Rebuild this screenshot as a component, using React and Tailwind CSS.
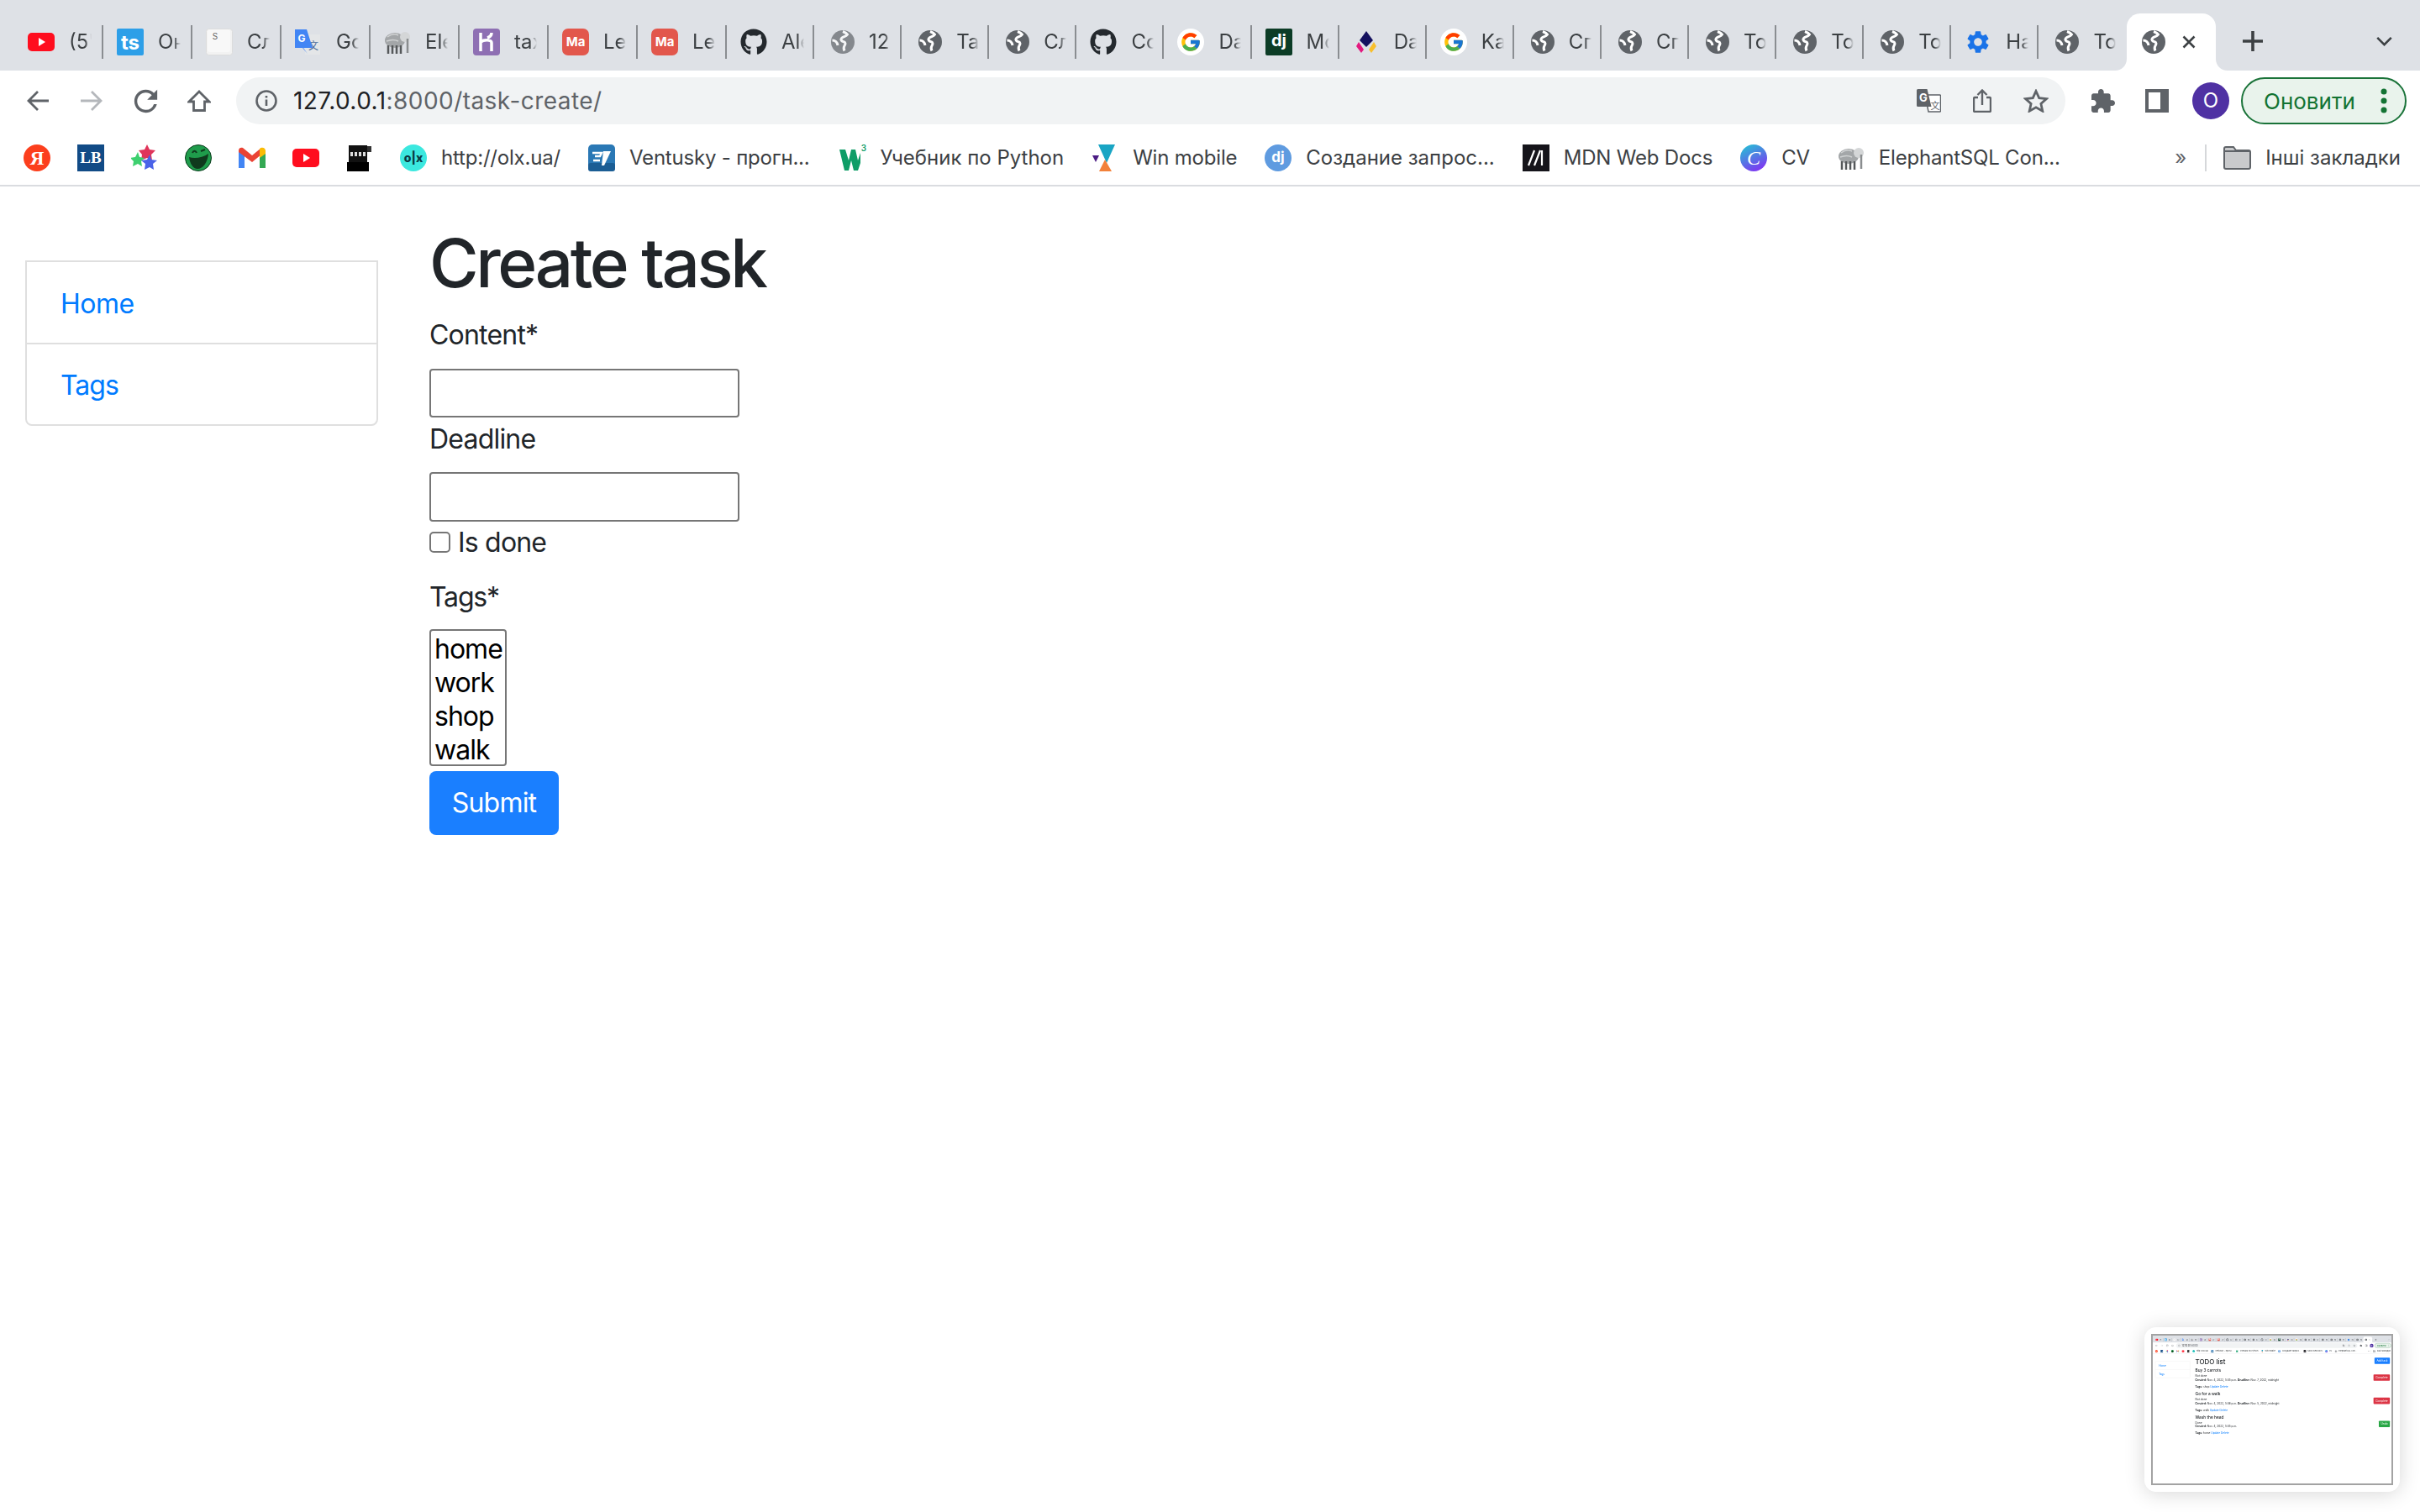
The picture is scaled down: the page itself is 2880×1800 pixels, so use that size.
import React from "react";
import { FaGithub } from "react-icons/fa";
import { FcGoogle } from "react-icons/fc";
import { MdSettings } from "react-icons/md";

const Svg = ({ children, className = "w-[32px] h-[32px]", box = "0 0 32 32" }) => (
  <svg viewBox={box} className={`${className} shrink-0`}>
    {children}
  </svg>
);

const Globe = ({ fade }) => (
  <Svg className={`w-[28px] h-[28px] ${fade ? "opacity-70" : ""}`} box="0 0 28 28">
    <circle cx="14" cy="14" r="14" fill="#5f6368" />
    <path d="M14 1.500c2.500 1 4.500 2 5.500 3.500-1.500 2.500-5 2.500-7 4.500-1.500 1.500 0 3.500 2 4 3 .5 3 3 1.500 5-1 1.500-1 4 0 6" stroke="#fff" strokeWidth="3" fill="none" />
    <path d="M1.500 12c3.500 0 6 2.500 6.500 6" stroke="#fff" strokeWidth="3" fill="none" />
  </Svg>
);

const YouTube = () => (
  <Svg>
    <rect x="0" y="5" width="32" height="22" rx="5" fill="#ff0d1e" />
    <path d="M13 11l8 5-8 5z" fill="#fff" />
  </Svg>
);

const Elephant = () => (
  <Svg>
    <ellipse cx="13" cy="14" rx="12" ry="9" fill="#a3a6a8" />
    <path d="M4 10c4-3 9-4 13-2M3 15c5-2 10-2 14 0" stroke="#d0d2d3" strokeWidth="1.500" fill="none" />
    <circle cx="25" cy="10" r="6" fill="#d4d6d7" />
    <path d="M28 12v17" stroke="#8a8d8f" strokeWidth="2.500" />
    <path d="M5 20v10M10 20v10M15 20v10M20 20v10" stroke="#55585a" strokeWidth="2.500" />
  </Svg>
);

const LetterIcon = ({ bg, text, size = 16, round = 4, color = "#fff", family = "Inter, sans-serif", weight = 700, y = 21 }) => (
  <Svg>
    <rect width="32" height="32" rx={round} fill={bg} />
    <text x="16" y={y} textAnchor="middle" fontSize={size} fontWeight={weight} fontFamily={family} fill={color}>
      {text}
    </text>
  </Svg>
);

const TranslateFav = () => (
  <Svg>
    <rect x="12" y="7" width="18" height="24" fill="#e4e6e8" />
    <text x="22" y="25" textAnchor="middle" fontSize="12" fill="#4a6a9a" fontFamily="'Noto Sans CJK SC', sans-serif">文</text>
    <path d="M0 1h14l7 22H10l5 7-6-7H0z" fill="#4285f4" />
    <text x="8" y="16" textAnchor="middle" fontSize="12" fontWeight="700" fill="#fff" fontFamily="Inter, sans-serif">G</text>
  </Svg>
);

const KeyFav = () => (
  <Svg>
    <rect x="0.500" y="0.500" width="31" height="31" rx="3" fill="#f2f2f2" stroke="#dcdcdc" />
    <rect x="2" y="1" width="27" height="27" rx="3" fill="#f8f8f8" />
    <text x="11" y="13" textAnchor="middle" fontSize="10" fill="#666" fontFamily="Inter, sans-serif">S</text>
  </Svg>
);

const HerokuFav = () => (
  <Svg>
    <rect width="32" height="32" rx="4" fill="#8e6fb3" />
    <path d="M9 5v22M9 16c4-3 13-3 13 1v10M22 5c0 3-2 5-5 6" stroke="#fff" strokeWidth="3.500" fill="none" />
  </Svg>
);

const GitHubFav = () => <FaGithub className="w-[32px] h-[32px] shrink-0 text-[#24292e]" />;

const GoogleFav = () => (
  <div className="w-[32px] h-[32px] shrink-0 rounded-full bg-white flex items-center justify-center">
    <FcGoogle className="w-[26px] h-[26px]" />
  </div>
);

const DiamondFav = () => (
  <Svg>
    <path d="M16 3l8 11-8 8-8-8z" fill="#14105e" />
    <path d="M7 16l6 9-3 4-6-8z" fill="#e3197f" />
    <path d="M25 16l-6 9 3 4 6-8z" fill="#f8bf2d" />
  </Svg>
);

const GearFav = () => <MdSettings className="w-[32px] h-[32px] shrink-0 text-[#1a73e8]" />;

const tabs = [
  { icon: <YouTube />, title: "(5'" },
  { icon: <LetterIcon bg="#2d9fe8" text="ts" size={24} round={2} y={25} />, title: "Он" },
  { icon: <KeyFav />, title: "Сл" },
  { icon: <TranslateFav />, title: "Go" },
  { icon: <Elephant />, title: "Ele" },
  { icon: <HerokuFav />, title: "tax" },
  { icon: <LetterIcon bg="#e2574c" text="Ma" size={15} round={7} />, title: "Le" },
  { icon: <LetterIcon bg="#e2574c" text="Ma" size={15} round={7} />, title: "Le" },
  { icon: <GitHubFav />, title: "Ale" },
  { icon: <Globe fade />, title: "12" },
  { icon: <Globe />, title: "Ta" },
  { icon: <Globe />, title: "Сл" },
  { icon: <GitHubFav />, title: "Co" },
  { icon: <GoogleFav />, title: "Da" },
  { icon: <LetterIcon bg="#0c3c26" text="dj" size={20} round={2} />, title: "Mo" },
  { icon: <DiamondFav />, title: "Da" },
  { icon: <GoogleFav />, title: "Ka" },
  { icon: <Globe />, title: "Сг" },
  { icon: <Globe />, title: "Сг" },
  { icon: <Globe />, title: "То" },
  { icon: <Globe />, title: "То" },
  { icon: <Globe />, title: "То" },
  { icon: <GearFav />, title: "Ha" },
  { icon: <Globe />, title: "То" },
];

const TabStrip = () => (
  <div className="flex h-[84px] bg-[#dee1e6] pl-[17px] pt-[16px]">
    {tabs.map((tab, i) => (
      <div key={i} className={`flex items-center h-[68px] ${i < 8 ? "w-[106px]" : "w-[104.1px]"}`}>
        <div className="w-[48px] shrink-0 flex justify-end">{tab.icon}</div>
        <div className="w-[27px] ml-[17px] overflow-hidden whitespace-nowrap text-[24px] text-[#3c4043] [mask-image:linear-gradient(to_right,black_70%,transparent)]">
          {tab.title}
        </div>
        <div className="flex-1" />
        {i < tabs.length - 1 && <div className="w-[2px] h-[40px] bg-[#8a8d91] shrink-0" />}
      </div>
    ))}
    <div className="relative flex items-center w-[106px] h-[68px] bg-white rounded-t-[16px]">
      <svg viewBox="0 0 14 14" className="absolute left-[-14px] bottom-0 w-[14px] h-[14px]">
        <path d="M14 0v14H0C8 14 14 8 14 0z" fill="#fff" />
      </svg>
      <svg viewBox="0 0 14 14" className="absolute right-[-14px] bottom-0 w-[14px] h-[14px]">
        <path d="M0 0v14h14C6 14 0 8 0 0z" fill="#fff" />
      </svg>
      <div className="ml-[18px]">
        <Globe />
      </div>
      <svg viewBox="0 0 16 16" className="ml-[20px] w-[16px] h-[16px]">
        <path d="M1.500 1.500l13 13M14.500 1.500l-13 13" stroke="#3c4043" strokeWidth="2.600" />
      </svg>
    </div>
    <svg viewBox="0 0 24 24" className="ml-[32px] mt-[21px] w-[24px] h-[24px]">
      <path d="M12 0v24M0 12h24" stroke="#3c4043" strokeWidth="3.600" />
    </svg>
    <svg viewBox="0 0 20 12" className="ml-[135px] mt-[28px] w-[19px] h-[11px]">
      <path d="M1 1l9 9 9-9" stroke="#3c4043" strokeWidth="2.800" fill="none" />
    </svg>
  </div>
);

const Toolbar = ({ host, path }) => (
  <div className="flex items-center h-[64px] pt-[8px] pl-[31px] bg-white">
    <svg viewBox="0 0 28 26" className="w-[28px] h-[26px] shrink-0">
      <path d="M27 13H3M14 2L3 13l11 11" stroke="#5f6368" strokeWidth="2.800" fill="none" />
    </svg>
    <svg viewBox="0 0 28 26" className="ml-[36px] w-[28px] h-[26px] shrink-0">
      <path d="M1 13h24M14 2l11 11-11 11" stroke="#b4b7bb" strokeWidth="2.800" fill="none" />
    </svg>
    <svg viewBox="3.500 3.500 17 17" className="ml-[36px] w-[29px] h-[29px] shrink-0">
      <path
        d="M17.650 6.350A7.958 7.958 0 0 0 12 4c-4.420 0-7.990 3.580-7.990 8s3.570 8 7.990 8c3.730 0 6.840-2.550 7.730-6h-2.080A5.990 5.990 0 0 1 12 18c-3.310 0-6-2.690-6-6s2.690-6 6-6c1.660 0 3.140.690 4.220 1.780L13 11h7V4l-2.350 2.350z"
        fill="#5f6368"
      />
    </svg>
    <svg viewBox="0 0 28 26" className="ml-[35px] w-[28px] h-[26px] shrink-0">
      <path d="M14 2L2 14h5.500v10.500h13V14H26z" stroke="#5f6368" strokeWidth="2.800" fill="none" />
    </svg>

    <div className="ml-[30px] flex items-center w-[2177px] h-[56px] rounded-full bg-[#f1f3f4] pl-[23px]">
      <svg viewBox="0 0 26 26" className="w-[26px] h-[26px] shrink-0">
        <circle cx="13" cy="13" r="11.500" stroke="#5f6368" strokeWidth="2.600" fill="none" />
        <path d="M13 11.500v7.500M13 7v2.600" stroke="#5f6368" strokeWidth="2.600" />
      </svg>
      <div className="ml-[19px] text-[28px] text-[#5f6368] whitespace-nowrap tracking-[0.45px]">
        <span className="text-[#202124]">{host}</span>
        {path}
      </div>
      <div className="flex-1" />
      <svg viewBox="0 0 29 28" className="w-[29px] h-[28px] shrink-0">
        <path d="M10 7h17.500a1 1 0 0 1 1 1v18a1 1 0 0 1-1 1H14z" fill="#fff" stroke="#5f6368" strokeWidth="1.500" />
        <path d="M1.500 0h11l5 21H1.500A1.500 1.500 0 0 1 0 19.500V1.500A1.500 1.500 0 0 1 1.500 0z" fill="#5f6368" />
        <text x="8" y="15" textAnchor="middle" fontSize="13" fontWeight="700" fill="#fff" fontFamily="Inter, sans-serif">G</text>
        <text x="22" y="24" textAnchor="middle" fontSize="11" fill="#5f6368" fontFamily="'Noto Sans CJK SC', sans-serif">文</text>
      </svg>
      <svg viewBox="0 0 22 28" className="ml-[38px] w-[22px] h-[28px] shrink-0">
        <path d="M6 10H2.500a1.500 1.500 0 0 0-1.500 1.500v14A1.500 1.500 0 0 0 2.500 27h17a1.500 1.500 0 0 0 1.500-1.500v-14A1.500 1.500 0 0 0 19.500 10H16M11 19V2M5.500 7L11 1.500 16.500 7" stroke="#5f6368" strokeWidth="2.400" fill="none" />
      </svg>
      <svg viewBox="0 0 30 28" className="ml-[38px] mr-[20px] w-[30px] h-[28px] shrink-0">
        <path d="M15 2.500l3.700 8.200 8.800.9-6.600 5.900 1.900 8.700L15 21.800l-7.800 4.400 1.900-8.700-6.600-5.900 8.800-.9z" stroke="#5f6368" strokeWidth="2.800" fill="none" />
      </svg>
    </div>

    <svg viewBox="2 1 21 21" className="ml-[30px] w-[30px] h-[28px] shrink-0">
      <path
        d="M20.500 11H19V7c0-1.100-.9-2-2-2h-4V3.500C13 2.120 11.880 1 10.500 1S8 2.120 8 3.500V5H4c-1.100 0-1.990.9-1.990 2v3.800H3.500c1.490 0 2.700 1.210 2.700 2.700s-1.210 2.700-2.700 2.700H2V20c0 1.100.9 2 2 2h3.800v-1.500c0-1.490 1.210-2.700 2.700-2.700 1.490 0 2.700 1.210 2.700 2.700V22H17c1.100 0 2-.9 2-2v-4h1.500c1.380 0 2.500-1.120 2.500-2.500S21.880 11 20.500 11z"
        fill="#5f6368"
      />
    </svg>
    <svg viewBox="0 0 28 28" className="ml-[35px] w-[28px] h-[28px] shrink-0">
      <path fillRule="evenodd" d="M0 0h28v28H0zM4 4v20h14V4z" fill="#5f6368" />
    </svg>
    <div className="ml-[28px] w-[44px] h-[44px] rounded-full bg-[#4f31a3] text-white text-[24px] flex items-center justify-center shrink-0">
      O
    </div>
    <div className="ml-[14px] w-[197px] h-[56px] rounded-full border-2 border-[#1a7339] bg-[#e9f3ec] flex items-center pl-[25px] shrink-0">
      <span className="text-[26px] text-[#137333]">Оновити</span>
      <svg viewBox="0 0 8 30" className="ml-[30px] w-[8px] h-[30px]">
        <circle cx="4" cy="4" r="3.500" fill="#137333" />
        <circle cx="4" cy="15" r="3.500" fill="#137333" />
        <circle cx="4" cy="26" r="3.500" fill="#137333" />
      </svg>
    </div>
  </div>
);

const StarsFav = () => (
  <Svg>
    <path d="M19 0l3 6 7 1-5 5 1 7-6-3-7 3 1-7-4-5 7-1z" fill="#e0355a" />
    <path d="M8 9l2 6 6 1-4 4 1 6-5-3-6 3 1-6-4-4 6-1z" fill="#3ed06f" />
    <path d="M22 12l2 6 7 1-5 4 1 7-5-3-6 3 1-7-5-4 7-1z" fill="#4a62e8" />
  </Svg>
);

const SmileFav = () => (
  <Svg>
    <circle cx="16" cy="16" r="15.500" fill="#1f9c4b" stroke="#0c3d1e" strokeWidth="1" />
    <path d="M5 15c6 2 16 1 23-4-1 10-6 18-13 18-5 0-9-6-10-14z" fill="#0f3a1d" />
    <path d="M9 10c1-3 4-3 5 0M19 8l5-2" stroke="#0f3a1d" strokeWidth="2" fill="none" />
  </Svg>
);

const GmailFav = () => (
  <Svg>
    <path d="M0 7v21h7V12z" fill="#4285f4" />
    <path d="M32 7v21h-7V12z" fill="#34a853" />
    <path d="M0 7c0-3 3-4 5-3l11 9 11-9v8L16 21 0 9z" fill="#ea4335" />
    <path d="M25 5c2-2 7-2 7 3v3l-7 5z" fill="#fbbc04" />
  </Svg>
);

const RegisterFav = () => (
  <Svg>
    <rect x="3" y="1" width="22" height="20" fill="#111" />
    <rect x="25" y="2" width="5" height="7" fill="#333" />
    <rect x="5" y="9" width="18" height="5" fill="#ddd" />
    <path d="M9 9v5M14 9v5M19 9v5" stroke="#111" strokeWidth="2" />
    <rect x="1" y="21" width="26" height="11" fill="#000" />
  </Svg>
);

const OlxFav = () => (
  <Svg>
    <circle cx="16" cy="16" r="16" fill="#3be8df" />
    <text x="16" y="21" textAnchor="middle" fontSize="14" fontWeight="800" fill="#0a3a44" fontFamily="Inter, sans-serif">o|x</text>
  </Svg>
);

const VentuskyFav = () => (
  <Svg>
    <rect width="32" height="32" rx="5" fill="#2a78b5" />
    <rect y="22" width="32" height="10" rx="3" fill="#1b5d94" />
    <path d="M5 10h11l-2 4H8M6 19h8" stroke="#fff" strokeWidth="2.500" fill="none" />
    <path d="M18 8h9l-8 17h-3z" fill="#fff" />
  </Svg>
);

const WinFav = () => (
  <Svg>
    <path d="M8 0h20l-10 22z" fill="#19a5c4" />
    <path d="M9 32l7-14 8 14z" fill="#f2813a" />
    <path d="M1 13h8l-4 8z" fill="#4b1d84" />
  </Svg>
);

const MdnFav = () => (
  <Svg>
    <rect width="32" height="32" fill="#15141a" />
    <path d="M7 25L14 7M14 25L21 7M23 25V7" stroke="#fff" strokeWidth="2.200" />
  </Svg>
);

const W3Fav = () => (
  <Svg>
    <path d="M0 6h7l4 13 3-13h5l3 13 3-9v12l-3 9h-5l-3-12-3 12H6z" fill="#0f9d67" />
    <text x="29" y="8" textAnchor="middle" fontSize="10" fontWeight="600" fill="#0f9d67" fontFamily="Inter, sans-serif">3</text>
  </Svg>
);

const CanvaFav = () => (
  <Svg>
    <defs>
      <linearGradient id="cv" x1="0" y1="0" x2="0.500" y2="1">
        <stop offset="0" stopColor="#1fcad3" />
        <stop offset="1" stopColor="#7a3df0" />
      </linearGradient>
    </defs>
    <circle cx="16" cy="16" r="16" fill="url(#cv)" />
    <text x="16" y="24" textAnchor="middle" fontSize="24" fontStyle="italic" fill="#fff" fontFamily="'Liberation Serif', serif">C</text>
  </Svg>
);

const bookmarks = [
  { icon: <LetterIcon bg="#fc3f1d" text="Я" size={23} round={16} family="'Liberation Serif', serif" y={24} /> },
  { icon: <LetterIcon bg="#114b86" text="LB" size={19} round={0} family="'Liberation Serif', serif" y={22} /> },
  { icon: <StarsFav /> },
  { icon: <SmileFav /> },
  { icon: <GmailFav /> },
  { icon: <YouTube /> },
  { icon: <RegisterFav /> },
  { icon: <OlxFav />, title: "http://olx.ua/", track: "tracking-[-0.2px]" },
  { icon: <VentuskyFav />, title: "Ventusky - прогн...", track: "tracking-[-0.2px]" },
  { icon: <W3Fav />, title: "Учебник по Python", track: "tracking-normal" },
  { icon: <WinFav />, title: "Win mobile", track: "tracking-[-0.2px]" },
  { icon: <LetterIcon bg="#5f9be0" text="dj" size={17} round={16} />, title: "Создание запрос...", track: "tracking-normal" },
  { icon: <MdnFav />, title: "MDN Web Docs", track: "tracking-[-0.2px]" },
  { icon: <CanvaFav />, title: "CV", track: "tracking-[-0.2px]" },
  { icon: <Elephant />, title: "ElephantSQL Con...", track: "tracking-[-0.2px]" },
];

const BookmarksBar = () => (
  <div className="flex items-center h-[74px] pt-[7px] pl-[28px] pr-[23px] border-b-2 border-[#dadce0] bg-white">
    <div className="flex items-center gap-[32px]">
      {bookmarks.map((b, i) => (
        <div key={i} className={`flex items-center gap-[17px] ${i === 9 ? "ml-[3px]" : i > 7 ? "ml-[1px]" : ""}`}>
          {b.icon}
          {b.title && <span className={`text-[24px] text-[#3c4043] whitespace-nowrap ${b.track}`}>{b.title}</span>}
        </div>
      ))}
    </div>
    <div className="flex-1" />
    <span className="text-[24px] text-[#5f6368]">»</span>
    <div className="ml-[22px] w-[2px] h-[32px] bg-[#d5d7da]" />
    <svg viewBox="0 0 33 28" className="ml-[20px] w-[33px] h-[28px] shrink-0">
      <path d="M1 3a2 2 0 0 1 2-2h9l3 4h15a2 2 0 0 1 2 2v18a2 2 0 0 1-2 2H3a2 2 0 0 1-2-2z" fill="#c9cacc" stroke="#5f6368" strokeWidth="2" />
      <path d="M1 6h31" stroke="#5f6368" strokeWidth="2" />
    </svg>
    <span className="ml-[17px] text-[24px] text-[#3c4043] whitespace-nowrap">Інші закладки</span>
  </div>
);

const Sidebar = () => (
  <div className="mt-[88px] ml-[30px] w-[420px] h-[197px] shrink-0 border-2 border-[#dfdfdf] rounded-b-[8px] flex flex-col text-[32px] text-[#007bff] tracking-[-0.5px]">
    <a className="block px-[40px] pt-[26px] leading-[48px] h-[98px] border-b-2 border-[#dfdfdf]">Home</a>
    <a className="block px-[40px] pt-[25px] leading-[48px] tracking-[-1px]">Tags</a>
  </div>
);

const Label = ({ children }) => <label className="block text-[32px] leading-[48px] text-[#212529]">{children}</label>;

const CreateForm = () => (
  <div className="ml-[61px] mt-[43px] flex flex-col items-start tracking-[-0.8px]">
    <h1 className="text-[80px] leading-[96px] font-[550] text-[#212529] mb-[14px] tracking-[-3.4px]">Create task</h1>
    <Label>Content*</Label>
    <input type="text" className="mt-[16px] mb-[2px] w-[369px] h-[58px] border-2 border-[#767676] rounded-[4px] bg-white" />
    <Label>Deadline</Label>
    <input type="text" className="mt-[15px] w-[369px] h-[59px] border-2 border-[#767676] rounded-[4px] bg-white" />
    <div className="mt-[1px] flex items-center h-[48px] text-[32px] text-[#212529]">
      <input type="checkbox" className="appearance-none w-[25px] h-[25px] border-2 border-[#767676] rounded-[5px] bg-white mr-[9px] mt-[-2px]" />
      <span>Is done</span>
    </div>
    <div className="mt-[17px] tracking-[-1.2px]">
      <Label>Tags*</Label>
    </div>
    <select multiple size={4} className="mt-[14px] w-[92px] h-[163px] py-[2px] border-2 border-[#767676] rounded-[4px] bg-white text-[32px] leading-[40px] text-black overflow-hidden outline-none tracking-[-1px]">
      <option className="px-[4px] py-0 h-[40px] min-h-0">home</option>
      <option className="px-[4px] py-0 h-[40px] min-h-0">work</option>
      <option className="px-[4px] py-0 h-[40px] min-h-0">shop</option>
      <option className="px-[4px] py-0 h-[40px] min-h-0">walk</option>
    </select>
    <button className="mt-[6px] w-[154px] h-[76px] bg-[#1a7fff] rounded-[8px] text-white text-[32px]">Submit</button>
  </div>
);

const todos = [
  { title: "Buy 3 carrots", status: "Not done", created: "Nov. 4, 2022, 5:45 p.m.", deadline: "Nov. 7, 2022, midnight", tags: "shop", action: "Complete" },
  { title: "Go for a walk", status: "Not done", created: "Nov. 4, 2022, 5:46 p.m.", deadline: "Nov. 5, 2022, midnight", tags: "walk", action: "Complete" },
  { title: "Wash the head", status: "Done", created: "Nov. 4, 2022, 5:45 p.m.", tags: "home", action: "Undo" },
];

const TodoPage = () => (
  <div className="flex-1 ml-[61px] mr-[30px] mt-[43px] text-[32px] leading-[48px] text-[#212529]">
    <div className="flex justify-between items-start">
      <h1 className="text-[80px] leading-[96px] font-medium">TODO list</h1>
      <div className="px-[26px] h-[76px] flex items-center rounded-[8px] bg-[#1a7fff] text-white">Add task</div>
    </div>
    {todos.map((t) => (
      <div key={t.title} className="mt-[31px] flex justify-between items-start">
        <div>
          <h4 className="text-[48px] leading-[58px] font-medium mb-[14px]">{t.title}</h4>
          <p>{t.status}</p>
          <p>
            <b>Created:</b> {t.created} {t.deadline && <b>Deadline:</b>} {t.deadline}
          </p>
          <p className="mt-[32px]">
            <b>Tags:</b> {t.tags} <span className="text-[#007bff]">Update Delete</span>
          </p>
        </div>
        <div className={`mt-[75px] px-[26px] h-[76px] flex items-center rounded-[8px] text-white ${t.action === "Undo" ? "bg-[#28a745]" : "bg-[#dc3545]"}`}>
          {t.action}
        </div>
      </div>
    ))}
  </div>
);

// small preview of another window, bottom right of the desktop
const Thumbnail = () => (
  <div className="absolute left-[2552px] top-[1580px] w-[304px] h-[196px] p-[8px] bg-white rounded-[14px] shadow-[0_2px_24px_rgba(0,0,0,0.16)]">
    <div className="w-[288px] h-[180px] overflow-hidden border-2 border-[#a3a3a3]">
      <div className="w-[2880px] h-[1800px] origin-top-left scale-[0.099] bg-white blur-[6px]">
        <TabStrip />
        <Toolbar host="127.0.0.1" path=":8000" />
        <BookmarksBar />
        <div className="flex">
          <Sidebar />
          <TodoPage />
        </div>
      </div>
    </div>
  </div>
);

export default function App() {
  return (
    <div className="relative w-[2880px] h-[1800px] overflow-hidden bg-white font-['Inter','Liberation_Sans',sans-serif]">
      <TabStrip />
      <Toolbar host="127.0.0.1" path=":8000/task-create/" />
      <BookmarksBar />
      <div className="flex">
        <Sidebar />
        <CreateForm />
      </div>
      <Thumbnail />
    </div>
  );
}
